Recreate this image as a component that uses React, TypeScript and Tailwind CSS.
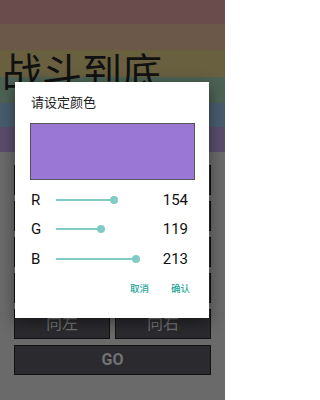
import React from "react";

const channels = [
  { label: "R", value: 154 },
  { label: "G", value: 119 },
  { label: "B", value: 213 },
];

const Slider = ({ value }: { value: number }) => {
  const pos = (value / 255) * 96;
  return (
    <div className="relative w-[96px] h-[8px]">
      <div
        className="absolute left-0 top-[3px] h-[2px] bg-[#80cbc4]"
        style={{ width: pos }}
      />
      <div
        className="absolute top-0 w-[8px] h-[8px] rounded-full bg-[#80cbc4]"
        style={{ left: pos - 4 }}
      />
    </div>
  );
};

const PadButton = ({ label, bold }: { label: string; bold?: boolean }) => {
  return (
    <div
      className={`flex-1 h-[30px] flex items-center justify-center bg-[#2b2b2f] border border-[#111] text-[#727272] text-[16px] ${
        bold ? "font-bold text-[15px]" : ""
      }`}
    >
      {label}
    </div>
  );
};

export default function App() {
  return (
    <div
      className="relative w-[225px] h-[400px] overflow-hidden bg-[#6a6a6a]"
      style={{ fontFamily: "Roboto, 'Noto Sans CJK SC', sans-serif" }}
    >
      <div className="h-[152px] bg-[linear-gradient(to_bottom,#6a4c4c_0_24px,#6b5848_24px_50px,#68603f_50px_77px,#4d6255_77px_103px,#495c6c_103px_127px,#594d6b_127px_152px)]">
        <div className="pt-[54px] pl-[2px] text-[40px] leading-[40px] text-[#111]">
          战斗到底
        </div>
      </div>

      <div className="flex flex-col gap-[6px] px-[14px] pt-[13px]">
        <div className="flex">
          <PadButton label="向前" />
        </div>
        <div className="flex">
          <PadButton label="加速" />
        </div>
        <div className="flex">
          <PadButton label="减速" />
        </div>
        <div className="flex">
          <PadButton label="向后" />
        </div>
        <div className="flex gap-[5px]">
          <PadButton label="向左" />
          <PadButton label="向右" />
        </div>
        <div className="flex">
          <PadButton label="GO" bold />
        </div>
      </div>

      <div className="absolute left-[15px] top-[82px] w-[194px] h-[236px] bg-white shadow-[0_4px_14px_rgba(0,0,0,0.45)] flex flex-col">
        <div className="pl-[16px] pt-[13px] text-[13px] leading-[16px] text-[#212121]">
          请设定颜色
        </div>
        <div className="ml-[15px] mt-[12px] w-[165px] h-[57px] bg-[#9a77d5] border border-[#555]" />
        <div className="flex flex-col mt-[5px]">
          {channels.map((c) => (
            <div key={c.label} className="flex items-center h-[29.5px] pl-[16px] pr-[21px]">
              <span className="w-[25px] text-[15px] text-[#111]">{c.label}</span>
              <Slider value={c.value} />
              <span className="flex-1 text-right text-[15px] text-[#111]">{c.value}</span>
            </div>
          ))}
        </div>
        <div className="flex justify-end gap-[22px] pr-[19px] mt-[8px] text-[9.5px] text-[#26a69a] font-medium">
          <span>取消</span>
          <span>确认</span>
        </div>
      </div>
    </div>
  );
}
